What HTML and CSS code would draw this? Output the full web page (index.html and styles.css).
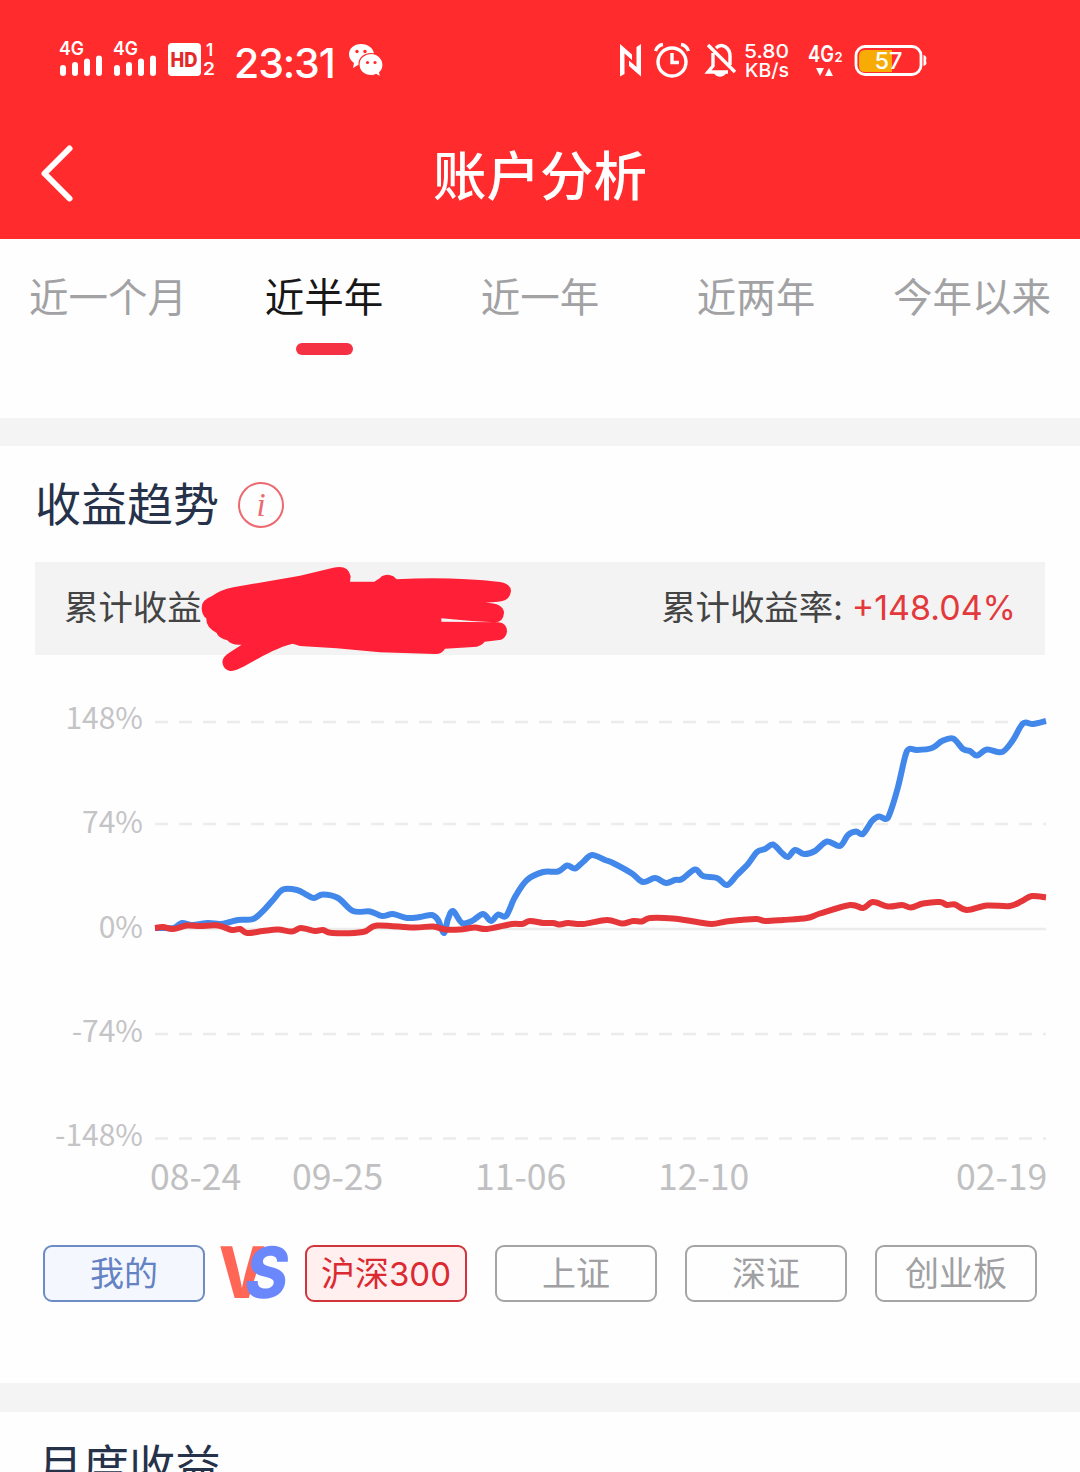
FILE: index.html
```
<!DOCTYPE html>
<html lang="zh-CN">

    <head>
        <meta charset="UTF-8">
        <meta name="viewport" content="width=device-width, initial-scale=1.0">
        <title>账户分析</title>
        <link rel="stylesheet" href="styles.css">
    </head>

    <body>
        <header class="header">
            <div class="status-bar">
                <div class="status-left">
                    <svg class="signal" width="46" height="44" viewBox="0 0 46 44">
                        <text x="1" y="16" textLength="25" lengthAdjust="spacingAndGlyphs">4G</text>
                        <path d="M5 29v5M17 26v8M29 22.500v11.500M41 19.500v14.500" />
                    </svg>
                    <svg class="signal" width="46" height="44" viewBox="0 0 46 44">
                        <text x="1" y="16" textLength="25" lengthAdjust="spacingAndGlyphs">4G</text>
                        <path d="M5 29v5M17 26v8M29 22.500v11.500M41 19.500v14.500" />
                    </svg>
                    <svg class="hd" width="50" height="44" viewBox="0 0 50 44">
                        <rect x="1" y="4" width="33" height="33" rx="4" />
                        <text class="hd-text" x="3.500" y="28" textLength="27" lengthAdjust="spacingAndGlyphs">HD</text>
                        <text class="sim" x="39" y="17">1</text>
                        <text class="sim" x="36" y="36" textLength="12" lengthAdjust="spacingAndGlyphs">2</text>
                    </svg>
                    <span class="time">23:31</span>
                    <svg class="wechat" width="36" height="44" viewBox="0 0 36 44">
                        <path fill="#fff" d="M13 5C6 5 1 9.500 1 15.500c0 3.500 2 6.500 5 8.500l-1 5 5-3c8 2 16-2 16-10.500C26 9.500 20 5 13 5z" />
                        <path fill="#fff" stroke="#ff2b2d" stroke-width="1.200" d="M23 14.500c-6.500 0-12 4.500-12 11s5 11 12 11c2 0 3.500-.3 5-1l4.500 2.500-.8-4.500c2-1.800 3.300-4.500 3.300-7.500 0-6.500-5.500-11.500-12-11.500z" />
                        <g fill="#ff2b2d">
                            <circle cx="9" cy="12.500" r="1.700" />
                            <circle cx="17" cy="12.500" r="1.700" />
                            <circle cx="19.500" cy="23.500" r="1.600" />
                            <circle cx="27" cy="23.500" r="1.600" />
                        </g>
                    </svg>
                </div>
                <div class="status-right">
                    <svg width="24" height="44" viewBox="0 0 24 44">
                        <path fill="#fff" d="M1 5L13 15.500V21L5.500 14.500V35L1 37.500zM22 37.500L10 27V21.500L17.500 28V8L22 5z" />
                    </svg>
                    <svg class="alarm" width="36" height="44" viewBox="0 0 36 44">
                        <circle class="line" cx="18" cy="23" r="14" />
                        <path class="line" d="M18 14v9.500h7M1.500 12c1-3 4-6 7.500-6.500M34.500 12c-1-3-4-6-7.500-6.500" />
                    </svg>
                    <svg class="bell" width="32" height="44" viewBox="0 0 32 44">
                        <path class="line" d="M8 14v13l-5 6h20M11 9C17 3 25 9 25 17v9M3 6l27 27" />
                        <path fill="#fff" d="M9 34h12c-2 5-10 5-12 0z" />
                    </svg>
                    <svg class="speed" width="46" height="44" viewBox="0 0 46 44">
                        <text x="0" y="19" textLength="45" lengthAdjust="spacingAndGlyphs">5.80</text>
                        <text x="1" y="38" textLength="44" lengthAdjust="spacingAndGlyphs">KB/s</text>
                    </svg>
                    <svg class="network" width="36" height="44" viewBox="0 0 36 44">
                        <text x="0" y="23" textLength="26" lengthAdjust="spacingAndGlyphs">4G</text>
                        <text class="sub" x="26.500" y="23">2</text>
                        <path fill="#fff" d="M8 29h8l-4 8zM17 37h8l-4-8z" />
                    </svg>
                    <svg class="battery" width="74" height="44" viewBox="0 0 74 44">
                        <path fill="#f8ab05" d="M38 11v22H11q-6 0-6-6V17q0-6 6-6z" />
                        <rect class="line" x="2" y="7.500" width="65" height="28" rx="9" />
                        <path fill="#fff" d="M69.500 16q4 1 2.500 5.500Q73.500 26 69.500 27z" />
                        <text x="20.500" y="29.500" textLength="28" lengthAdjust="spacingAndGlyphs">57</text>
                    </svg>
                </div>
            </div>
            <div class="nav">
                <svg class="back" width="40" height="60" viewBox="0 0 40 60">
                    <path d="M29.500 4.500L4.500 29.500l25 25" />
                </svg>
                <h1>账户分析</h1>
            </div>
        </header>

        <nav class="tabs">
            <div class="tab">近一个月</div>
            <div class="tab active">近半年</div>
            <div class="tab">近一年</div>
            <div class="tab">近两年</div>
            <div class="tab">今年以来</div>
        </nav>

        <section class="trend">
            <div class="section-title">
                <h2>收益趋势</h2>
                <span class="info">i</span>
            </div>

            <div class="summary">
                <span>累计收益</span>
                <span class="rate">累计收益率: <b>+148.04%</b></span>
                <svg class="scribble" width="340" height="120" viewBox="0 0 1020 360">
                    <path d="M35 158Q35 135 65 124Q90 105 130 97L330 62L430 38Q475 28 482 64L480 80H553Q570 71 575 64Q592 54 610 64L620 73Q780 64 930 81Q962 86 963 108Q960 138 925 140L885 143Q942 144 942 174Q940 203 912 202Q830 198 754 190V200L925 202Q951 204 951 230Q948 254 922 256L884 260Q873 275 850 276L765 281Q755 298 735 297L570 292L440 280L330 273L308 266C245 282 195 318 150 340Q130 350 120 348Q98 342 97 320Q98 306 120 292L155 269Q125 272 112 256Q85 250 80 234Q47 217 49 190Q35 180 35 158z" />
                </svg>
            </div>

            <svg class="chart" width="1080" height="540" viewBox="0 670 1080 540">
                <g class="grid">
                    <path d="M155 722H1046M155 824H1046M155 1034H1046M155 1138.500H1046" />
                    <path class="zero" d="M155 929H1046" />
                </g>
                <g class="y-labels">
                    <text x="143" y="729">148%</text>
                    <text x="143" y="833">74%</text>
                    <text x="143" y="938">0%</text>
                    <text x="143" y="1042">-74%</text>
                    <text x="143" y="1146">-148%</text>
                </g>
                <g class="x-labels">
                    <text x="150" y="1190">08-24</text>
                    <text x="292" y="1190">09-25</text>
                    <text x="475" y="1190">11-06</text>
                    <text x="658" y="1190">12-10</text>
                    <text x="956" y="1190">02-19</text>
                </g>
                <path id="mine" class="series mine-line" />
                <path id="index" class="series index-line" />
            </svg>

            <div class="compare">
                <button class="mine">我的</button>
                <svg class="vs" width="74" height="57" viewBox="0 0 74 57">
                    <text class="v" transform="translate(1 52.500) skewX(-1)" textLength="47" lengthAdjust="spacingAndGlyphs">V</text>
                    <text class="s" transform="translate(25 52.500) skewX(-9)" textLength="43" lengthAdjust="spacingAndGlyphs">S</text>
                </svg>
                <button class="selected">沪深<span>300</span></button>
                <button>上证</button>
                <button>深证</button>
                <button>创业板</button>
            </div>
        </section>

        <section class="monthly">
            <h2>月度收益</h2>
        </section>

        <script src="script.js"></script>
    </body>

</html>
```
FILE: styles.css
```
* {
    box-sizing: border-box;
}

body {
    margin: 0;
    width: 1080px;
    height: 1472px;
    overflow: hidden;
    background-color: #fefefe;
    font-family: "Noto Sans CJK SC", sans-serif;
}

h1,
h2 {
    margin: 0;
    font-weight: 400;
}

svg {
    display: block;
    flex-shrink: 0;
}

.header {
    height: 239px;
    background-color: #ff2b2d;
    color: white;
}

/* status bar */
.status-bar {
    display: flex;
    justify-content: space-between;
    height: 122px;
    padding: 39px 152px 0 58px;
    font-family: Inter, sans-serif;
}

.status-bar svg {
    overflow: visible;
}

.status-left,
.status-right {
    display: flex;
    height: 44px;
}

.status-bar text {
    fill: white;
    font-size: 19px;
    font-weight: 600;
}

.signal {
    margin-right: 8px;
}

.signal path {
    stroke: white;
    stroke-width: 6;
    stroke-linecap: round;
}

.hd {
    margin-left: 1px;
}

.hd rect {
    fill: white;
}

.status-bar .hd-text {
    fill: #e4292b;
    font-size: 20px;
    font-weight: 800;
}

.status-bar .sim {
    font-size: 17px;
}

.time {
    width: 100px;
    margin-left: 17px;
    font-size: 41px;
    font-weight: 500;
    line-height: 48px;
    letter-spacing: -1.1px;
    white-space: nowrap;
}

.wechat {
    margin-left: 14px;
}

.line {
    fill: none;
    stroke: white;
    stroke-width: 3.4;
}

.alarm {
    margin-left: 11px;
}

.bell {
    margin-left: 15px;
}

.speed {
    margin-left: 7px;
}

.status-bar .speed text {
    font-size: 19px;
    font-weight: 500;
}

.network {
    margin-left: 18px;
}

.status-bar .network text {
    font-size: 23px;
}

.status-bar .network .sub {
    font-size: 13px;
}

.battery {
    margin-left: 10px;
}

.battery .line {
    stroke-width: 2.8;
}

.status-bar .battery text {
    font-size: 23px;
    font-weight: 500;
}

/* title row */
.nav {
    display: flex;
    align-items: center;
    height: 104px;
    padding: 0 40px;
}

.back path {
    fill: none;
    stroke: white;
    stroke-width: 6;
    stroke-linecap: round;
    stroke-linejoin: round;
}

.nav h1 {
    flex: 1;
    margin-right: 40px;
    padding-bottom: 3px;
    text-align: center;
    font-size: 53.5px;
    font-weight: 500;
    line-height: 80px;
}

/* tabs */
.tabs {
    display: flex;
    height: 179px;
}

.tab {
    display: flex;
    flex-direction: column;
    align-items: center;
    width: 216px;
    padding-top: 26px;
    font-size: 39.5px;
    line-height: 60px;
    color: #a2a2a4;
}

.tab.active {
    color: #171717;
}

.tab.active::after {
    content: "";
    width: 57px;
    height: 12px;
    margin-top: 18px;
    border-radius: 6px;
    background-color: #f53144;
}

.trend {
    height: 994px;
    border-top: 28px solid #f4f4f4;
    border-bottom: 29px solid #f4f4f4;
}

.section-title {
    display: flex;
    align-items: center;
    height: 116px;
    padding-left: 35px;
}

h2 {
    font-size: 46px;
    line-height: 64px;
    color: #26324a;
}

.section-title h2 {
    padding-bottom: 6px;
}

.info {
    width: 46px;
    height: 46px;
    margin: 1px 0 0 19px;
    border: 2px solid #ec6970;
    border-radius: 50%;
    text-align: center;
    font-family: "Liberation Serif", serif;
    font-size: 33px;
    font-style: italic;
    line-height: 43px;
    color: #ec6970;
}

.summary {
    position: relative;
    display: flex;
    justify-content: space-between;
    width: 1010px;
    height: 93px;
    margin-left: 35px;
    padding: 0 29px;
    background-color: #f3f3f3;
    font-size: 34.4px;
    line-height: 87px;
    color: #444;
}

.rate {
    display: flex;
    gap: 9px;
    white-space: nowrap;
}

.summary b {
    font-family: Inter, sans-serif;
    font-size: 34px;
    font-weight: 400;
    line-height: 91px;
    color: #e3393c;
}

/* hides the amount */
.scribble {
    position: absolute;
    left: 155px;
    top: -7px;
}

.scribble path {
    fill: #ff1f36;
}

/* chart */
.chart {
    margin-top: 15px;
}

.grid path {
    fill: none;
    stroke: #ececec;
    stroke-width: 2.5;
    stroke-dasharray: 13 11;
}

.grid .zero {
    stroke-dasharray: none;
}

.y-labels {
    font-size: 30px;
    fill: #c4c4c6;
    text-anchor: end;
}

.x-labels {
    font-size: 35.6px;
    fill: #c0c0c2;
}

.series {
    fill: none;
    stroke-width: 6;
    stroke-linejoin: round;
}

.mine-line {
    stroke: #4287ea;
}

.index-line {
    stroke: #e5363a;
}

/* compare buttons */
.compare {
    display: flex;
    margin-top: 35px;
    padding-left: 43px;
}

button {
    width: 162px;
    height: 57px;
    margin-right: 28px;
    padding: 0 0 3px;
    border: 2px solid #a5a5a7;
    border-radius: 9px;
    background-color: transparent;
    font-family: inherit;
    font-size: 34px;
    line-height: 50px;
    white-space: nowrap;
    color: #a0a0a3;
}

.mine {
    margin-right: 12px;
    border-color: #6d8cc4;
    background-color: #f4f8fe;
    color: #6482c4;
}

.selected {
    border-color: #d0353c;
    background-color: #ffefee;
    color: #db2a32;
}

.selected span {
    font-family: Inter, sans-serif;
    font-size: 33px;
}

.vs {
    margin-right: 14px;
    overflow: visible;
    font-family: Inter, sans-serif;
    font-size: 71px;
    font-weight: 800;
}

.v {
    fill: #ff6656;
}

.s {
    fill: #6a88fb;
}

.monthly {
    padding: 19px 0 0 37px;
}
```
FILE: script.js
```
// points of both lines, x and y in chart units
const mine = [
    [155, 928], [165, 928], [174, 928], [182, 923], [192, 925], [208, 923], [220, 924], [230, 922],
    [238, 920], [253, 919], [263, 911], [273, 900], [283, 889.500], [297, 890], [307, 895], [314, 898],
    [323, 894.500], [338, 898], [353, 911], [370, 911.500], [382, 916], [393, 914], [407, 918],
    [420, 917], [432, 915], [438, 920], [444, 933], [448, 919], [453, 911], [462, 923], [472, 921],
    [483, 914], [491, 921], [498, 914.500], [506, 916], [515, 897], [527, 880], [543, 872], [558, 871.500],
    [567, 865.500], [575, 868.500], [583, 862], [592, 855], [605, 860], [613, 863], [632, 873.500],
    [643, 882], [655, 878], [666, 883], [675, 880], [682, 879], [695, 869.500], [703, 876], [717, 878],
    [727, 885], [737, 875], [748, 864], [757, 852], [765, 849], [773, 844.500], [782, 853], [788, 857],
    [795, 850], [804, 854], [815, 851], [827, 841.500], [840, 846], [848, 835], [856, 831.500], [863, 834],
    [872, 821], [879, 816.500], [886, 819], [890, 813], [898, 787], [905, 757], [909, 749], [917, 750],
    [932, 748], [942, 741], [953, 738.500], [963, 749], [970, 751], [977, 755.500], [987, 749.500],
    [1002, 752], [1013, 740], [1023, 723.500], [1033, 724], [1046, 721]
]

const index = [
    [155, 928], [163, 927], [173, 929], [187, 925.500], [200, 926], [218, 925.500], [232, 930], [240, 929],
    [247, 933], [263, 931], [278, 929.500], [292, 931.500], [301, 928], [315, 931], [323, 930], [332, 933],
    [363, 932], [377, 925.500], [413, 927.500], [433, 926.500], [445, 929.500], [460, 929.500], [475, 927.500],
    [487, 929], [512, 924], [522, 924], [530, 921], [543, 923], [553, 923], [560, 924.500], [568, 923],
    [583, 924], [607, 920], [622, 923.500], [633, 921], [642, 921.500], [650, 918], [673, 918.500],
    [697, 922], [712, 924], [726, 921.500], [740, 920], [757, 919], [765, 921], [783, 920], [807, 918],
    [820, 913.500], [850, 905], [863, 908], [873, 902], [888, 906.500], [902, 905], [911, 907.500],
    [923, 903.500], [940, 902], [947, 905], [955, 904.500], [967, 910], [987, 905.500], [1010, 906],
    [1022, 901], [1032, 896], [1046, 897.500]
]

// smooth curve through all points
function getPath(points) {
    let d = "M" + points[0]
    for (let i = 0; i < points.length - 1; i++) {
        const a = points[i - 1] || points[i]
        const b = points[i]
        const c = points[i + 1]
        const e = points[i + 2] || c
        d += "C" + [
            b[0] + (c[0] - a[0]) / 6, b[1] + (c[1] - a[1]) / 6,
            c[0] - (e[0] - b[0]) / 6, c[1] - (e[1] - b[1]) / 6,
            c[0], c[1]
        ]
    }
    return d
}

document.getElementById("mine").setAttribute("d", getPath(mine))
document.getElementById("index").setAttribute("d", getPath(index))
```
